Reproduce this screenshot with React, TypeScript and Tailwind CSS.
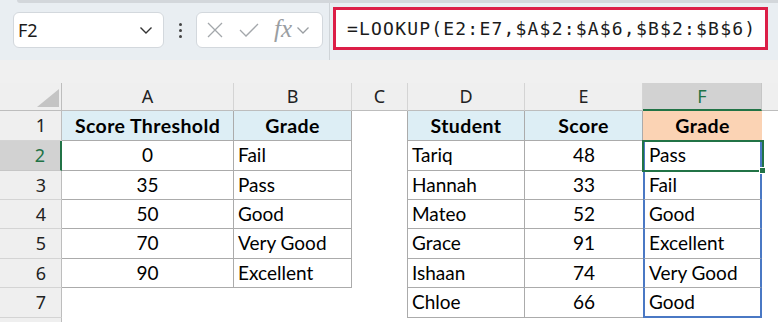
import { ReactNode } from 'react';

type Cell = {
  text?: string;
  align?: 'left' | 'center';
  bold?: boolean;
  className?: string;
};

const colWidths = 'grid-cols-[62px_172px_118px_56px_117px_118px_119px_16px]';
const rowHeights = 'grid-rows-[28px_30px_30px_29px_29px_30px_29px_30px_10px]';

const left = ['Score Threshold', '0', '35', '50', '70', '90'];
const leftGrade = ['Grade', 'Fail', 'Pass', 'Good', 'Very Good', 'Excellent'];
const students = [
  ['Student', 'Score', 'Grade'],
  ['Tariq', '48', 'Pass'],
  ['Hannah', '33', 'Fail'],
  ['Mateo', '52', 'Good'],
  ['Grace', '91', 'Excellent'],
  ['Ishaan', '74', 'Very Good'],
  ['Chloe', '66', 'Good'],
];

function GridCell({ text, align = 'left', bold, className = '' }: Cell) {
  return (
    <div
      className={`flex items-center overflow-hidden whitespace-nowrap text-black ${
        align === 'center' ? 'justify-center' : 'justify-start pl-[4px]'
      } ${bold ? 'font-bold text-[19.5px] tracking-[0.4px]' : 'text-[19px]'} ${className}`}
    >
      {text}
    </div>
  );
}

function ColHead({ label, active }: { label: string; active?: boolean }) {
  return (
    <div
      className={`flex items-center justify-center border-r border-b text-[18px] ${
        active
          ? 'bg-[#d2d2d2] border-r-[#c6c6c6] border-b-2 border-b-[#217346] text-[#217346]'
          : 'bg-[#efefef] border-r-[#d4d4d4] border-b-[#bdbdbd] text-[#222]'
      }`}
      style={{ fontFamily: '"Noto Sans", sans-serif' }}
    >
      {label}
    </div>
  );
}

function RowHead({ n, active }: { n: string; active?: boolean }) {
  return (
    <div
      className={`flex items-center justify-end pr-[15px] border-b text-[18px] ${
        active
          ? 'bg-[#d2d2d2] border-r-2 border-r-[#217346] border-b-[#c6c6c6] text-[#217346]'
          : 'bg-[#efefef] border-r border-r-[#bdbdbd] border-b-[#d4d4d4] text-[#222]'
      }`}
      style={{ fontFamily: '"Noto Sans", sans-serif' }}
    >
      {n}
    </div>
  );
}

function Toolbar() {
  return (
    <div className="relative h-[60px] bg-[#e9eef2] flex items-center">
      <div className="absolute top-0 left-[17px] right-0 h-[3px] bg-[#d3d7db] rounded-bl-[3px]" />
      <div className="ml-[13px] w-[151px] h-[36px] bg-white border border-[#d3d8dd] rounded-[6px] flex items-center justify-between pl-[4px] pr-[10px]">
        <span className="text-[18px] text-[#1b1b1b]" style={{ fontFamily: '"Noto Sans", sans-serif' }}>
          F2
        </span>
        <svg width="14" height="10" viewBox="0 0 14 10">
          <path d="M1.5 2.5 L7 8 L12.5 2.5" fill="none" stroke="#333" strokeWidth="1.4" />
        </svg>
      </div>
      <div className="w-[32px] flex flex-col items-center gap-[3px]">
        <span className="w-[3px] h-[3px] bg-[#444] rounded-full" />
        <span className="w-[3px] h-[3px] bg-[#444] rounded-full" />
        <span className="w-[3px] h-[3px] bg-[#444] rounded-full" />
      </div>
      <div className="w-[127px] h-[36px] bg-white border border-[#d3d8dd] rounded-[6px] flex items-center pl-[9px]">
        <svg width="18" height="18" viewBox="0 0 18 18">
          <path d="M2 2 L16 16 M16 2 L2 16" stroke="#a3a7ab" strokeWidth="1.3" />
        </svg>
        <svg width="22" height="18" viewBox="0 0 22 18" className="ml-[14px]">
          <path d="M2 9 L8 15 L20 3" fill="none" stroke="#a3a7ab" strokeWidth="1.3" />
        </svg>
        <span
          className="ml-[14px] text-[25px] italic text-[#9a9ea2] leading-none -mt-[3px]"
          style={{ fontFamily: '"Liberation Serif", serif' }}
        >
          fx
        </span>
        <svg width="14" height="10" viewBox="0 0 14 10" className="ml-[4px]">
          <path d="M1.5 2.5 L7 8 L12.5 2.5" fill="none" stroke="#9a9ea2" strokeWidth="1.3" />
        </svg>
      </div>
      <div className="w-px h-[60px] bg-[#cfd4d8] ml-[6px]" />
      <div className="ml-[3px] w-[435px] h-[43px] -mt-[3px] bg-white border-[3px] border-[#dc1e47] flex items-center pl-[11px]">
        <span
          className="text-[18px] tracking-[1.2px] text-[#1b1b1b]"
          style={{ fontFamily: '"DejaVu Sans Mono", monospace' }}
        >
          =LOOKUP(E2:E7,$A$2:$A$6,$B$2:$B$6)
        </span>
      </div>
    </div>
  );
}

function Sheet() {
  const b = 'border-[#ababab]';
  const cells: ReactNode[] = [];

  // column header row
  cells.push(
    <div key="corner" className="relative bg-[#efefef] border-r border-b border-[#bdbdbd]">
      <svg width="22" height="18" viewBox="0 0 22 18" className="absolute right-[2px] bottom-[3px]">
        <path d="M22 0 L22 18 L0 18 Z" fill="#c4c4c4" />
      </svg>
    </div>
  );
  ['A', 'B', 'C', 'D', 'E', 'F'].forEach((l) => cells.push(<ColHead key={`h${l}`} label={l} active={l === 'F'} />));
  cells.push(<div key="hG" className="bg-[#efefef] border-b border-[#bdbdbd]" />);

  for (let r = 0; r < 7; r++) {
    cells.push(<RowHead key={`r${r}`} n={String(r + 1)} active={r === 1} />);

    // A, B
    if (r < 6) {
      const head = r === 0;
      cells.push(
        <GridCell
          key={`a${r}`}
          text={left[r]}
          align="center"
          bold={head}
          className={`border-r border-b ${b} ${head ? 'bg-[#ddeef5]' : 'bg-white'}`}
        />
      );
      cells.push(
        <GridCell
          key={`b${r}`}
          text={leftGrade[r]}
          align={head ? 'center' : 'left'}
          bold={head}
          className={`border-r border-b ${b} ${head ? 'bg-[#ddeef5]' : 'bg-white'}`}
        />
      );
    } else {
      cells.push(<div key={`a${r}`} className="bg-white" />);
      cells.push(<div key={`b${r}`} className="bg-white" />);
    }

    // C
    cells.push(<div key={`c${r}`} className={`bg-white border-r ${b}`} />);

    // D, E, F
    const [d, e, f] = students[r];
    const head = r === 0;
    cells.push(
      <GridCell
        key={`d${r}`}
        text={d}
        align={head ? 'center' : 'left'}
        bold={head}
        className={`border-r border-b ${b} ${head ? 'bg-[#ddeef5]' : 'bg-white'}`}
      />
    );
    cells.push(
      <GridCell
        key={`e${r}`}
        text={e}
        align="center"
        bold={head}
        className={`border-b ${b} ${head ? 'bg-[#ddeef5] border-r' : 'bg-white'}`}
      />
    );
    cells.push(
      <GridCell
        key={`f${r}`}
        text={f}
        align={head ? 'center' : 'left'}
        bold={head}
        className={
          head
            ? 'bg-[#fbd3b4]'
            : `bg-white border-l-2 border-r-2 border-[#4a78c4] border-b ${
                r === 6 ? 'border-b-2 border-b-[#4a78c4]' : 'border-b-[#ababab]'
              }`
        }
      />
    );
    cells.push(<div key={`g${r}`} className="bg-white" />);
  }

  cells.push(<div key="r8" className="bg-[#efefef] border-r border-[#bdbdbd]" />);
  for (let i = 0; i < 7; i++) cells.push(<div key={`z${i}`} className="bg-white" />);

  return (
    <div className="relative">
      <div className={`grid ${colWidths} ${rowHeights}`}>{cells}</div>
      {/* active cell F2 */}
      <div className="absolute left-[642px] top-[57px] w-[122px] h-[32px] border-2 border-[#217346] pointer-events-none" />
      <div className="absolute left-[759px] top-[84px] w-[7px] h-[7px] bg-[#217346] border border-white" />
    </div>
  );
}

export default function App() {
  return (
    <div
      className="w-[778px] h-[322px] overflow-hidden bg-[#f0f0f0]"
      style={{ fontFamily: 'Lato, "Open Sans", sans-serif' }}
    >
      <Toolbar />
      <div className="h-[23px] bg-[#f0f0f0]" />
      <Sheet />
    </div>
  );
}
